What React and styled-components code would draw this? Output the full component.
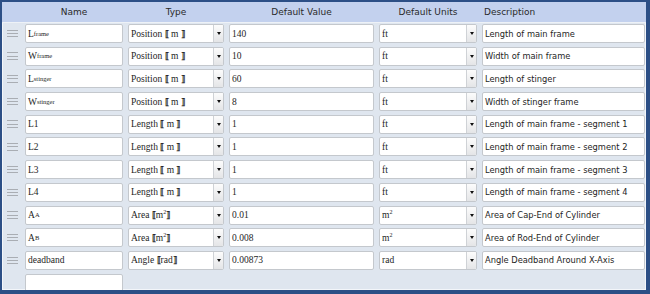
import styled, { createGlobalStyle } from 'styled-components'

const Global = createGlobalStyle`
  body {
    margin: 0;
    background: #ffffff;
  }
`

const cols = '18px 98px 96px 145px 98px 1fr'

const Frame = styled.div`
  width: 650px;
  height: 294px;
  box-sizing: border-box;
  border-style: solid;
  border-color: #2c4f86;
  border-width: 2px 4px 4px 2px;
  display: flex;
  flex-direction: column;
  overflow: hidden;
`

const Header = styled.div`
  height: 20px;
  flex-shrink: 0;
  display: grid;
  grid-template-columns: ${cols};
  column-gap: 5px;
  align-items: center;
  background: #c3d1ee;
  border-bottom: 1px solid #eef2f7;
  font-family: "DejaVu Sans", Verdana, sans-serif;
  font-size: 9px;
  color: #2a2a2a;
`

const HeadCell = styled.div`
  text-align: ${(p) => (p.$left ? 'left' : 'center')};
  padding-left: ${(p) => (p.$left ? '2px' : '0')};
  white-space: nowrap;
`

const Body = styled.div`
  flex: 1;
  background: #dfe6ef;
  box-shadow: inset 1px 0 0 #f3f6fa, inset -1px -1px 0 #f3f6fa;
  padding: 1px 1px 0 0;
  display: grid;
  grid-template-columns: ${cols};
  grid-auto-rows: 19px;
  column-gap: 5px;
  row-gap: 3.7px;
  overflow: hidden;
`

const Handle = styled.div`
  display: flex;
  flex-direction: column;
  justify-content: center;
  gap: 2.3px;
  padding-left: 5px;
  span {
    display: block;
    width: 11px;
    height: 1px;
    background: #a9adb3;
  }
`

const Field = styled.div`
  height: 19px;
  box-sizing: border-box;
  background: #ffffff;
  border: 1px solid #c4c8cd;
  border-radius: 2px;
  padding-left: 2px;
  display: flex;
  align-items: center;
  white-space: pre;
  overflow: hidden;
  font-family: ${(p) =>
    p.$sans
      ? '"DejaVu Sans", Verdana, sans-serif'
      : '"Liberation Serif", "DejaVu Serif", serif'};
  font-size: ${(p) => (p.$sans ? '8.3px' : '9.5px')};
  color: #1e1e1e;
  sub {
    font-size: 6.5px;
    vertical-align: -2.5px;
    line-height: 0;
  }
  sup {
    font-size: 6px;
    vertical-align: 4px;
    line-height: 0;
  }
`

const Select = styled(Field)`
  padding-right: 0;
`

const SelectText = styled.div`
  flex: 1;
  overflow: hidden;
`

const Arrow = styled.div`
  width: 10px;
  height: 100%;
  box-sizing: border-box;
  border-left: 1px solid #cfd2d6;
  background: linear-gradient(#fcfcfc, #e4e5e7);
  display: flex;
  align-items: center;
  justify-content: center;
  &::after {
    content: '';
    border-left: 2.5px solid transparent;
    border-right: 2.5px solid transparent;
    border-top: 3px solid #111;
  }
`

const Bracket = styled.span`
  font-family: "DejaVu Serif", serif;
  font-size: 8.5px;
  font-weight: bold;
`

const rows = [
  { name: <>L<sub>frame</sub></>, type: 'Position', tu: 'm', value: '140', units: 'ft', desc: 'Length of main frame' },
  { name: <>W<sub>frame</sub></>, type: 'Position', tu: 'm', value: '10', units: 'ft', desc: 'Width of main frame' },
  { name: <>L<sub>stinger</sub></>, type: 'Position', tu: 'm', value: '60', units: 'ft', desc: 'Length of stinger' },
  { name: <>W<sub>stinger</sub></>, type: 'Position', tu: 'm', value: '8', units: 'ft', desc: 'Width of stinger frame' },
  { name: 'L1', type: 'Length', tu: 'm', value: '1', units: 'ft', desc: 'Length of main frame - segment 1' },
  { name: 'L2', type: 'Length', tu: 'm', value: '1', units: 'ft', desc: 'Length of main frame - segment 2' },
  { name: 'L3', type: 'Length', tu: 'm', value: '1', units: 'ft', desc: 'Length of main frame - segment 3' },
  { name: 'L4', type: 'Length', tu: 'm', value: '1', units: 'ft', desc: 'Length of main frame - segment 4' },
  { name: <>A<sub>A</sub></>, type: 'Area', tu: <>m<sup>2</sup></>, value: '0.01', units: <>m<sup>2</sup></>, desc: 'Area of Cap-End of Cylinder' },
  { name: <>A<sub>B</sub></>, type: 'Area', tu: <>m<sup>2</sup></>, value: '0.008', units: <>m<sup>2</sup></>, desc: 'Area of Rod-End of Cylinder' },
  { name: 'deadband', type: 'Angle', tu: 'rad', value: '0.00873', units: 'rad', desc: 'Angle Deadband Around X-Axis' },
]

const Row = ({ r }) => (
  <>
    <Handle>
      <span />
      <span />
      <span />
    </Handle>
    <Field>{r.name}</Field>
    <Select>
      <SelectText>
        {r.type + ' '}
        <Bracket>⟦</Bracket>
        {r.tu === 'm' ? ' m ' : r.tu}
        <Bracket>⟧</Bracket>
      </SelectText>
      <Arrow />
    </Select>
    <Field>{r.value}</Field>
    <Select>
      <SelectText>{r.units}</SelectText>
      <Arrow />
    </Select>
    <Field $sans>{r.desc}</Field>
  </>
)

const Spacer = styled.div``

export default function App() {
  return (
    <>
      <Global />
      <Frame>
        <Header>
          <HeadCell />
          <HeadCell>Name</HeadCell>
          <HeadCell>Type</HeadCell>
          <HeadCell>Default Value</HeadCell>
          <HeadCell>Default Units</HeadCell>
          <HeadCell $left>Description</HeadCell>
        </Header>
        <Body>
          {rows.map((r, i) => (
            <Row key={i} r={r} />
          ))}
          <Spacer />
          <Field />
        </Body>
      </Frame>
    </>
  )
}
